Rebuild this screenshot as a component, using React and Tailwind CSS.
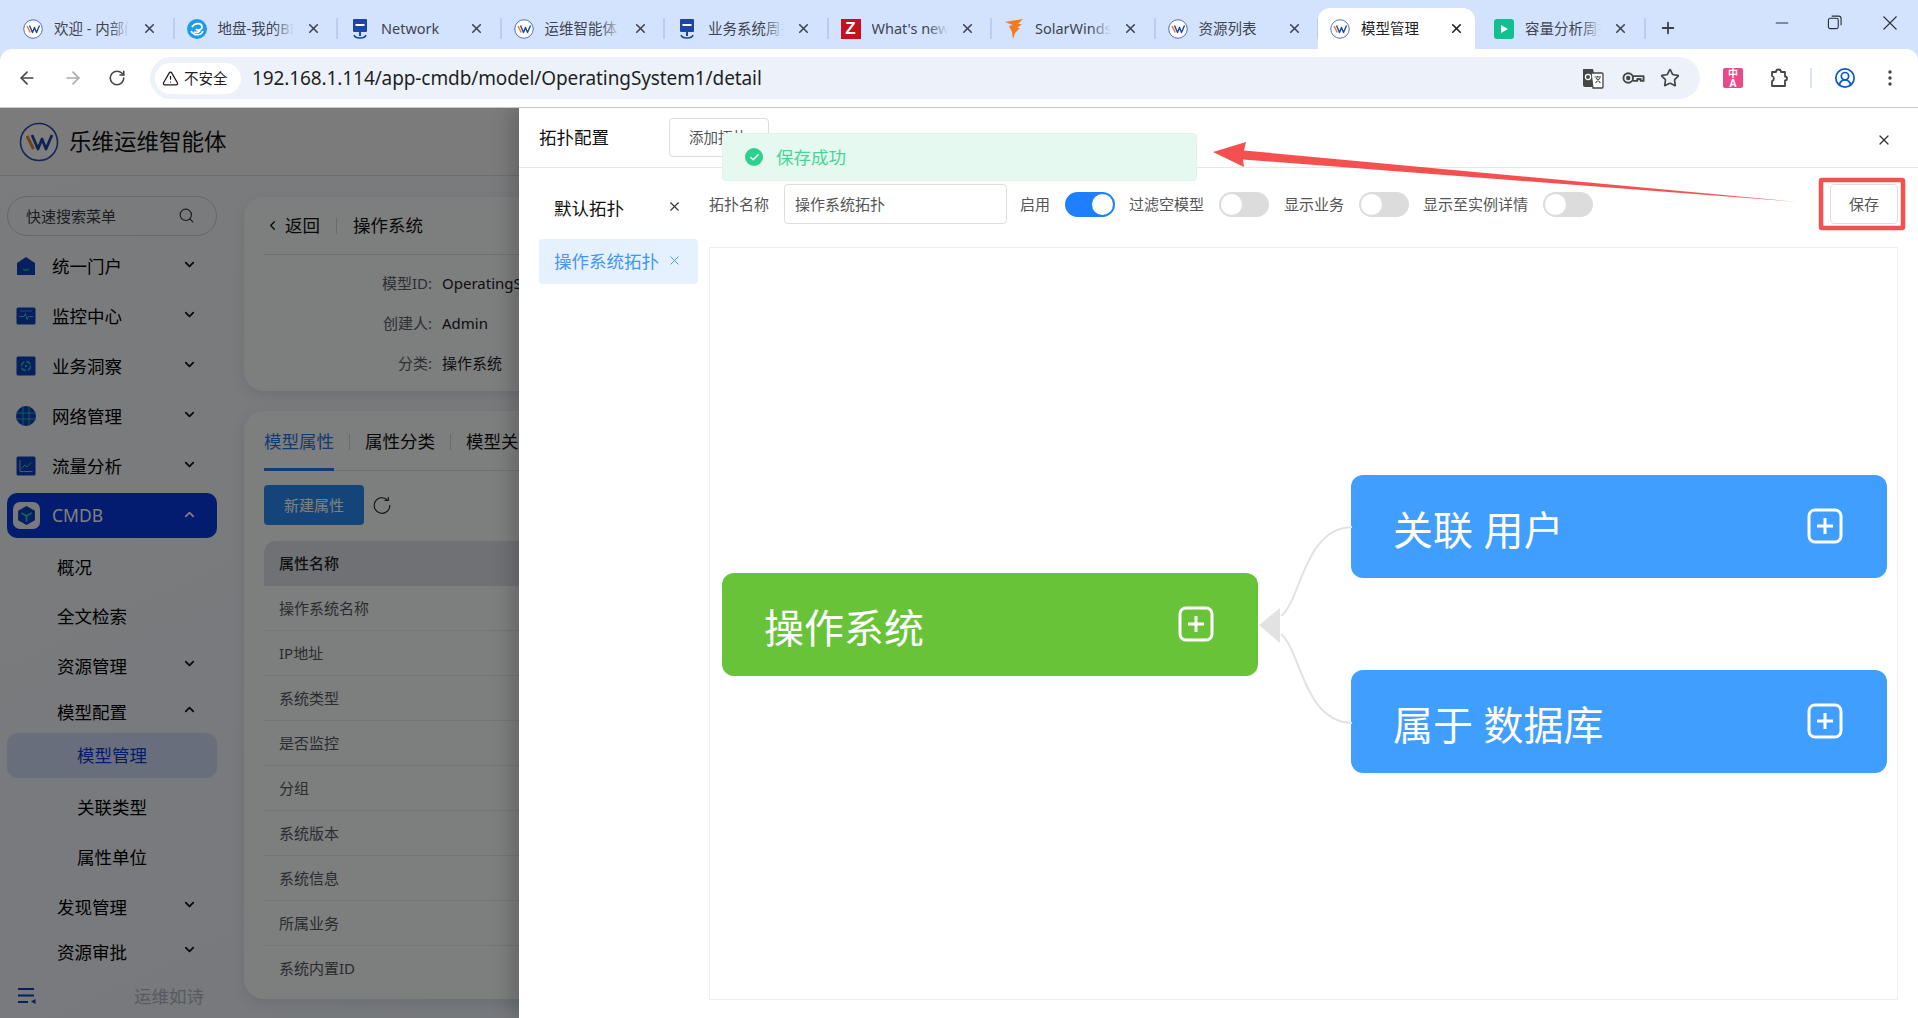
import React from 'react';
import { ArrowLeft, ArrowRight, RotateCw, TriangleAlert, Star, CircleUserRound, X, Plus, Minus, Search, ChevronDown, ChevronUp, ChevronLeft, Check } from 'lucide-react';

const FONT = "font-['Noto_Sans','Noto_Sans_CJK_SC',sans-serif]";

function WLogo({ className }) {
  return (
    <svg viewBox="0 0 40 40" className={className}>
      <circle cx="20" cy="20" r="18.5" fill="#fff" stroke="#2a4fa8" strokeWidth="1.6" />
      <path d="M8 14 L14.5 27" stroke="#e8842a" strokeWidth="3" fill="none" />
      <path d="M13 13 L19 27 L23 17 L27 27 L33 13" stroke="#1f47a6" strokeWidth="2.8" fill="none" strokeLinejoin="round" />
    </svg>
  );
}
function Swirl() {
  return (
    <svg viewBox="0 0 20 20" className="w-5 h-5">
      <circle cx="10" cy="10" r="10" fill="#1e9be8" />
      <path d="M5 8 C8 3 15 4 15 8 C15 11 10 12 9 10 M4 12 C7 17 14 17 16 12 M7 13 C10 14 13 13 13 11" stroke="#fff" strokeWidth="1.7" fill="none" />
    </svg>
  );
}
function Monitor() {
  return (
    <svg viewBox="0 0 20 20" className="w-5 h-5">
      <rect x="3" y="0" width="14" height="13" rx="1" fill="#1b46a8" />
      <rect x="5.5" y="5" width="9" height="2" fill="#fff" />
      <rect x="9" y="13" width="2" height="4" fill="#1b46a8" />
      <path d="M4 16 C5 20 15 20 16 16" stroke="#1b46a8" strokeWidth="1.5" fill="none" />
    </svg>
  );
}
function ZIcon() {
  return (
    <div className="w-5 h-5 bg-[#c4111b] text-white font-bold text-[17px] leading-5 text-center font-['Liberation_Sans',sans-serif]">Z</div>
  );
}
function Flame() {
  return (
    <svg viewBox="0 0 20 20" className="w-5 h-5">
      <path d="M1 3 L19 0 L14 5 L18 5 L13 9 L16 9 L11 14 L9 20 L8 13 L5 7 L9 6 Z" fill="#f37a20" />
    </svg>
  );
}
function PlayIcon() {
  return (
    <div className="w-5 h-5 rounded-[3px] bg-[#10c090] flex items-center justify-center">
      <svg viewBox="0 0 10 10" className="w-2.5 h-2.5"><path d="M2 1 L9 5 L2 9Z" fill="#fff" /></svg>
    </div>
  );
}

const tabs = [
  { t: '欢迎 - 内部门户', i: <WLogo className="w-5 h-5" /> },
  { t: '地盘-我的BI看板', i: <Swirl /> },
  { t: 'Network', i: <Monitor /> },
  { t: '运维智能体', i: <WLogo className="w-5 h-5" /> },
  { t: '业务系统周报表', i: <Monitor /> },
  { t: "What's new in", i: <ZIcon /> },
  { t: 'SolarWinds Pla', i: <Flame /> },
  { t: '资源列表', i: <WLogo className="w-5 h-5" /> },
  { t: '模型管理', i: <WLogo className="w-5 h-5" />, active: true },
  { t: '容量分析周报表', i: <PlayIcon /> },
];

function Tab({ t, i, active, last }) {
  if (active) {
    return (
      <div className="relative w-[163px] h-[41px] shrink-0 flex items-center">
        <div className="absolute left-[-1px] right-[7px] top-0 bottom-0 bg-white rounded-t-[12px]" />
        <div className="relative ml-[11px] mr-[11px] shrink-0">{i}</div>
        <span className="relative text-[14.5px] text-[#1f1f1f] whitespace-nowrap">{t}</span>
        <X className="relative ml-auto mr-[18px] text-[#202020]" size={15} strokeWidth={2.6} />
      </div>
    );
  }
  return (
    <div className="relative w-[163.5px] h-[41px] shrink-0 flex items-center">
      <div className="ml-[12px] mr-[11px] shrink-0">{i}</div>
      <div className="relative w-[76px] overflow-hidden">
        <span className="block text-[14.5px] text-[#3f4450] whitespace-nowrap">{t}</span>
        <div className="absolute right-0 top-0 bottom-0 w-5 bg-gradient-to-r from-[#d3e3fd00] to-[#d3e3fd]" />
      </div>
      <X className="absolute left-[131px] top-[13px] text-[#3f4450]" size={15} strokeWidth={2.6} />
      {!last && <div className="absolute right-0 top-[10px] w-[2px] h-[21px] bg-[#b9cdf0]" />}
    </div>
  );
}

function TabStrip() {
  return (
    <div className="h-[49px] bg-[#d3e3fd] flex items-end pl-[11px] pb-0 relative">
      <div className="flex items-start h-[49px] pt-[8px]">
        {tabs.map((x, k) => <Tab key={k} {...x} />)}
        <div className="w-[2px] h-[21px] bg-[#b9cdf0] mt-[10px] -ml-[2px]" />
        <Plus className="ml-[13px] mt-[11px] text-[#3c4043]" size={18} strokeWidth={2.4} />
      </div>
      <div className="ml-auto flex h-[49px] items-center pb-[4px] text-[#2c3038]">
        <Minus size={20} strokeWidth={1.3} className="mr-[35px]" />
        <svg viewBox="0 0 16 16" className="w-[15px] h-[15px] mr-[41px]" fill="none" stroke="#2c3038" strokeWidth="1.2">
          <rect x="1.5" y="3.5" width="10.5" height="11" rx="2" />
          <path d="M5 1.2 H12.5 A2.5 2.5 0 0 1 15 3.7 V11" />
        </svg>
        <svg viewBox="0 0 14 14" className="w-[14px] h-[14px] mr-[21px]" stroke="#2c3038" strokeWidth="1.1"><path d="M0.5 0.5 L13.5 13.5 M13.5 0.5 L0.5 13.5" /></svg>
      </div>
    </div>
  );
}

function Toolbar() {
  return (
    <div className="h-[59px] bg-[#d3e3fd]">
      <div className="h-[59px] bg-white rounded-t-[12px] border-b border-[#c9c9c9] flex items-center">
        <ArrowLeft size={20} strokeWidth={2} className="ml-[17px] text-[#444746]" />
        <ArrowRight size={20} strokeWidth={2} className="ml-[26px] text-[#a8abaf]" />
        <RotateCw size={18} strokeWidth={2.1} className="ml-[25px] text-[#444746]" />
        <div className="ml-[24px] w-[1550px] h-[42px] rounded-full bg-[#edf2fa] flex items-center pl-[5px] pr-[20px]">
          <div className="h-[31px] w-[86px] rounded-full bg-white flex items-center pl-[7px]">
            <TriangleAlert size={17} strokeWidth={1.8} className="text-[#1f1f1f]" />
            <span className="ml-[5px] text-[14.5px] text-[#1f1f1f] leading-none">不安全</span>
          </div>
          <span className="ml-[11px] text-[19px] text-[#1f1f1f] leading-none tracking-[-0.1px]">192.168.1.114/app-cmdb/model/OperatingSystem1/detail</span>
          <div className="ml-auto flex items-center">
            <svg viewBox="0 0 22 22" className="w-[22px] h-[22px]">
              <path d="M1 2 H11 L15 20 H3 A2 2 0 0 1 1 18Z" fill="#444746" />
              <path d="M9 6 H20 A1 1 0 0 1 21 7 V20 A1 1 0 0 1 20 21 H11Z" fill="#fff" stroke="#444746" strokeWidth="1.3" />
              <circle cx="6" cy="10" r="2.6" fill="none" stroke="#fff" strokeWidth="1.3" />
              <path d="M12.5 10 H19 M15.5 9 V10.5 M13.5 16 L18 11 M14 11 L18.5 16" stroke="#444746" strokeWidth="1.1" fill="none" />
            </svg>
            <svg viewBox="0 0 24 14" className="w-[23px] h-[14px] ml-[18px]" fill="none" stroke="#444746" strokeWidth="2">
              <circle cx="6.5" cy="7" r="5" />
              <circle cx="6.5" cy="7" r="1.3" fill="#444746" />
              <path d="M11.5 5 H22.5 V10 H19.5 V8 H16 V10 H11.5" strokeLinejoin="round" />
            </svg>
            <Star size={20} strokeWidth={2} className="ml-[15px] text-[#444746]" />
          </div>
        </div>
        <div className="ml-[23px] w-5 h-5 rounded-[2px] bg-[#ea4a8a] text-white text-[10px] leading-[10px] font-bold flex flex-col items-center justify-center">
          <span>中</span><span>A</span>
        </div>
        <svg viewBox="0 0 20 20" className="w-5 h-5 ml-[26px]" fill="none" stroke="#444746" strokeWidth="1.8" strokeLinejoin="round">
          <path d="M3 4 H7 A2.2 2.2 0 0 1 12 4 H16 V8.5 A2 2 0 0 1 16 12.5 V18 H3 V13 A2.6 2.6 0 0 0 3 8Z" />
        </svg>
        <div className="w-[2px] h-[20px] bg-[#dbe4f4] ml-[21px]" />
        <CircleUserRound size={22} strokeWidth={1.9} className="ml-[22px] text-[#0b57d0]" />
        <svg viewBox="0 0 6 18" className="w-[6px] h-[18px] ml-[31px]"><circle cx="3" cy="3" r="1.7" fill="#444746" /><circle cx="3" cy="9" r="1.7" fill="#444746" /><circle cx="3" cy="15" r="1.7" fill="#444746" /></svg>
      </div>
    </div>
  );
}

const NAVY = '#0f3fb8';
const iconHouse = (
  <svg viewBox="0 0 20 20" className="w-[20px] h-[20px]"><path d="M10 1 L19 7 V19 H1 V7Z" fill={NAVY} /><path d="M7 13 Q10 15.5 13 13" stroke="#17c0a0" strokeWidth="1.4" fill="none" /></svg>
);
const iconMon = (
  <svg viewBox="0 0 20 20" className="w-[20px] h-[20px]"><rect x="0.5" y="1.5" width="19" height="17" rx="1.5" fill={NAVY} /><path d="M3 10.5 H8 L9.5 7.5 L11 13.5 L12.5 10.5 H17" stroke="#3cc8c0" strokeWidth="1" fill="none" /><path d="M4 5 H16" stroke="#5d84e0" strokeWidth="1" /></svg>
);
const iconBiz = (
  <svg viewBox="0 0 20 20" className="w-[20px] h-[20px]"><rect x="0.5" y="0.5" width="19" height="19" rx="1.5" fill={NAVY} /><circle cx="10" cy="10" r="4.5" stroke="#2ac8c8" strokeWidth="1.4" fill="none" strokeDasharray="5 2" /><circle cx="10" cy="10" r="1.2" fill="#2ac8c8" /></svg>
);
const iconGlobe = (
  <svg viewBox="0 0 20 20" className="w-[20px] h-[20px]"><circle cx="10" cy="10" r="10" fill={NAVY} /><path d="M0 7 H20 M0 13 H20 M7 0 V20 M13 0 V20" stroke="#22c0b8" strokeWidth="0.9" /></svg>
);
const iconChart = (
  <svg viewBox="0 0 20 20" className="w-[20px] h-[20px]"><rect x="0.5" y="0.5" width="19" height="19" rx="1.5" fill={NAVY} /><path d="M4 4 V15.5 H16.5" stroke="#8fb0f0" strokeWidth="1" fill="none" /><path d="M5.5 12.5 L9 9 L11 11 L15 6.5" stroke="#35c8b0" strokeWidth="1" fill="none" /></svg>
);
const iconCube = (
  <div className="w-[27px] h-[27px] rounded-[7px] bg-[#f2f4f8] flex items-center justify-center">
    <svg viewBox="0 0 20 20" className="w-[21px] h-[21px]"><path d="M10 1 L18 5.5 V14.5 L10 19 L2 14.5 V5.5Z" fill="#0a3ec0" /><path d="M5 7.5 L10 10.5 L15 7.5 M10 10.5 V16" stroke="#28d0a8" strokeWidth="1.6" fill="none" /></svg>
  </div>
);

function TopNav({ icon, label, open }) {
  return (
    <div className="h-[50px] flex items-center relative">
      <div className="ml-[16px] w-[20px] h-[20px] flex items-center justify-center">{icon}</div>
      <span className="ml-[16px] text-[17.5px] text-[#000]">{label}</span>
      <ChevronDown size={15} strokeWidth={2.8} className="absolute left-[182px] top-[16px] text-[#111]" />
    </div>
  );
}
function SubNav({ label, h, chev, up, deep }) {
  return (
    <div className={`${h} flex items-center relative`}>
      <span className={`text-[17.5px] text-[#000] ${deep ? 'ml-[77px]' : 'ml-[57px]'}`}>{label}</span>
      {chev && (up
        ? <ChevronUp size={15} strokeWidth={2.8} className="absolute left-[182px] top-[calc(50%-10px)] text-[#111]" />
        : <ChevronDown size={15} strokeWidth={2.8} className="absolute left-[182px] top-[calc(50%-10px)] text-[#111]" />)}
    </div>
  );
}

function Sidebar() {
  return (
    <div className="w-[219px] shrink-0 flex flex-col h-full">
      <div className="mx-[7px] mt-[20px] h-[40px] w-[210px] rounded-full border border-[#c6ccd6] flex items-center pl-[18px] relative">
        <span className="text-[15px] text-[#3a4048]">快速搜索菜单</span>
        <Search size={17} strokeWidth={1.6} className="absolute left-[170px] top-[10px] text-[#333]" />
      </div>
      <div className="mt-[5px] flex flex-col">
        <TopNav icon={iconHouse} label="统一门户" />
        <TopNav icon={iconMon} label="监控中心" />
        <TopNav icon={iconBiz} label="业务洞察" />
        <TopNav icon={iconGlobe} label="网络管理" />
        <TopNav icon={iconChart} label="流量分析" />
        <div className="mt-[2px] mx-[7px] h-[45px] w-[210px] rounded-[10px] bg-[#0638e0] flex items-center relative">
          <div className="ml-[6px]">{iconCube}</div>
          <span className="ml-[12px] text-[17.5px] text-white font-['Noto_Sans',sans-serif]">CMDB</span>
          <ChevronUp size={15} strokeWidth={2.8} className="absolute left-[175px] top-[14px] text-white" />
        </div>
        <div className="mt-[4px]" />
        <SubNav label="概况" h="h-[50px]" />
        <SubNav label="全文检索" h="h-[48px]" />
        <SubNav label="资源管理" h="h-[52px]" chev />
        <SubNav label="模型配置" h="h-[40px]" chev up />
        <div className="mt-[1px] mx-[7px] h-[45px] w-[210px] rounded-[10px] bg-[#d3ddf8] flex items-center">
          <span className="ml-[70px] text-[17.5px] text-[#0a3ad0]">模型管理</span>
        </div>
        <div className="mt-[4px]" />
        <SubNav label="关联类型" h="h-[50px]" deep />
        <SubNav label="属性单位" h="h-[50px]" deep />
        <SubNav label="发现管理" h="h-[50px]" chev />
        <SubNav label="资源审批" h="h-[40px]" chev />
      </div>
      <div className="mt-auto h-[44px] flex items-center relative">
        <svg viewBox="0 0 18 16" className="ml-[18px] w-[18px] h-[16px]">
          <path d="M0 1 H16 M0 7.5 H16 M0 14 H10" stroke="#0f3fb8" strokeWidth="1.8" />
          <path d="M17.5 11 V16 L13 13.5Z" fill="#0f3fb8" />
        </svg>
        <span className="absolute left-[134px] text-[17.5px] text-[#aeb5c3]">运维如诗</span>
      </div>
    </div>
  );
}

function InfoRow({ k, v }) {
  return (
    <div className="h-[40px] flex items-center text-[15px]">
      <span className="w-[168px] text-right text-[#5c6068]">{k}</span>
      <span className="ml-[10px] text-[#1d2026] whitespace-nowrap">{v}</span>
    </div>
  );
}

const attrs = ['操作系统名称', 'IP地址', '系统类型', '是否监控', '分组', '系统版本', '系统信息', '所属业务', '系统内置ID'];

function Main() {
  return (
    <div className="flex-1 min-w-0 pl-[25px] pt-[21px] pr-[20px] flex flex-col gap-[20px]">
      <div className="h-[194px] rounded-[20px] bg-[#fbfcfd] shadow-[0_4px_14px_rgba(40,60,100,0.12)] px-[20px]">
        <div className="h-[58px] border-b border-[#dfe2e6] flex items-center text-[17.5px] text-[#111]">
          <ChevronLeft size={15} strokeWidth={2} className="ml-[1px]" />
          <span className="ml-[5px]">返回</span>
          <div className="ml-[16px] w-px h-[16px] bg-[#d4d7dc]" />
          <span className="ml-[16px]">操作系统</span>
        </div>
        <div className="mt-[8px]">
          <InfoRow k="模型ID:" v="OperatingSystem1" />
          <InfoRow k="创建人:" v="Admin" />
          <InfoRow k="分类:" v="操作系统" />
        </div>
      </div>
      <div className="h-[588px] rounded-[20px] bg-[#fbfcfd] shadow-[0_4px_14px_rgba(40,60,100,0.12)] px-[20px]">
        <div className="h-[60px] border-b border-[#dfe2e6] flex items-end text-[17.5px] text-[#111]">
          <div className="h-[60px] w-[70px] border-b-[3px] border-[#1f78e6] text-[#1f78e6] flex items-center justify-center -mb-px pt-[3px] whitespace-nowrap">模型属性</div>
          <div className="h-[60px] flex items-center pt-[3px]">
            <div className="ml-[15px] w-px h-[16px] bg-[#d4d7dc]" />
            <span className="ml-[15px]">属性分类</span>
            <div className="ml-[15px] w-px h-[16px] bg-[#d4d7dc]" />
            <span className="ml-[15px]">模型关联</span>
          </div>
        </div>
        <div className="mt-[14px] h-[40px] flex items-center">
          <div className="w-[100px] h-[40px] rounded-[4px] bg-[#2a8af0] text-white text-[15px] flex items-center justify-center">新建属性</div>
          <svg viewBox="0 0 18 18" className="ml-[9px] w-[18px] h-[18px]" fill="none" stroke="#222" strokeWidth="1.1">
            <path d="M15 4.5 A7.8 7.8 0 1 0 16.8 9" />
            <path d="M11.5 4.5 H15.3 V1" />
          </svg>
        </div>
        <div className="mt-[16px] h-[45px] rounded-t-[12px] bg-[#dfe3ea] flex items-center pl-[15px] text-[15px] text-[#222] font-medium">属性名称</div>
        {attrs.map((a) => (
          <div key={a} className="h-[45px] border-b border-[#e8eaed] last:border-b-0 flex items-center pl-[15px] text-[15px] text-[#555a60]">{a}</div>
        ))}
      </div>
    </div>
  );
}

function Toggle({ on }) {
  return (
    <div className={`w-[50px] h-[25px] rounded-full shrink-0 flex items-center px-[2px] ${on ? 'bg-[#1e80ff] justify-end' : 'bg-[#dcdcdc] justify-start'}`}>
      <div className="w-[21px] h-[21px] rounded-full bg-white" />
    </div>
  );
}

function PlusBox({ className }) {
  return (
    <svg viewBox="0 0 36 36" className={`w-[36px] h-[36px] ${className || ''}`} fill="none" stroke="#fff" strokeWidth="3">
      <rect x="2" y="2" width="32" height="32" rx="6" />
      <path d="M18 10 V26 M10 18 H26" />
    </svg>
  );
}

function Node({ label, pos, color }) {
  return (
    <div className={`absolute ${pos} w-[536px] h-[103px] rounded-[12px] ${color} flex items-center`}>
      <span className="ml-[42px] mt-[6px] text-[40px] leading-none text-white">{label}</span>
      <PlusBox className="absolute left-[456px] top-[33px]" />
    </div>
  );
}

function Drawer() {
  return (
    <div className="absolute left-[519px] top-0 right-0 bottom-0 bg-white flex flex-col shadow-[-8px_0_18px_rgba(0,0,0,0.18)]">
      <div className="h-[60px] border-b border-[#e8e8e8] flex items-center pl-[20px] relative shrink-0">
        <span className="text-[17.5px] text-[#111]">拓扑配置</span>
        <div className="ml-[60px] w-[100px] h-[39px] rounded-[4px] border border-[#dcdcdc] flex items-center pl-[19px] text-[14.5px] text-[#555]">添加拓扑</div>
        <X size={16} strokeWidth={1.8} className="absolute right-[26px] top-[24px] text-[#333]" />
      </div>
      <div className="flex-1 flex min-h-0">
        <div className="w-[190px] shrink-0 pl-[20px] pt-[20px]">
          <div className="h-[40px] flex items-center pl-[15px] relative">
            <span className="text-[17.5px] text-[#111]">默认拓扑</span>
            <X size={15} strokeWidth={1.7} className="absolute left-[128px] top-[11px] text-[#333]" />
          </div>
          <div className="mt-[11px] w-[159px] h-[45px] rounded-[4px] bg-[#e6f1ff] flex items-center pl-[15px] relative">
            <span className="text-[17.5px] text-[#3f96f8] whitespace-nowrap">操作系统拓扑</span>
            <X size={15} strokeWidth={1.5} className="absolute left-[128px] top-[14px] text-[#3f96f8]" />
          </div>
        </div>
        <div className="flex-1 min-w-0 pt-[16px] pr-[20px] pb-[18px] flex flex-col">
          <div className="h-[40px] flex items-center text-[15px] text-[#555] shrink-0 whitespace-nowrap">
            <span>拓扑名称</span>
            <div className="ml-[15px] w-[223px] h-[40px] rounded-[4px] border border-[#dedede] flex items-center pl-[10px]">操作系统拓扑</div>
            <span className="ml-[13px]">启用</span>
            <div className="ml-[15px]"><Toggle on /></div>
            <span className="ml-[14px]">过滤空模型</span>
            <div className="ml-[15px]"><Toggle /></div>
            <span className="ml-[15px]">显示业务</span>
            <div className="ml-[15px]"><Toggle /></div>
            <span className="ml-[14px]">显示至实例详情</span>
            <div className="ml-[15px]"><Toggle /></div>
            <div className="ml-auto w-[68px] h-[40px] rounded-[4px] border border-[#dedede] flex items-center justify-center">保存</div>
          </div>
          <div className="mt-[23px] flex-1 border border-[#eeeeee] relative">
            <Node label="操作系统" pos="left-[12px] top-[325px]" color="bg-[#68c339]" />
            <Node label="关联 用户" pos="left-[641px] top-[227px]" color="bg-[#409eff]" />
            <Node label="属于 数据库" pos="left-[641px] top-[422px]" color="bg-[#409eff]" />
            <svg viewBox="0 0 100 240" className="absolute left-[549px] top-[258px] w-[100px] h-[240px]" fill="none">
              <path d="M22 110 C42 95 45 22 93 21" stroke="#e2e2e2" strokeWidth="2" />
              <path d="M22 128 C42 145 45 216 93 217" stroke="#e2e2e2" strokeWidth="2" />
              <path d="M0 119 L21 102 L21 137Z" fill="#e2e2e2" />
            </svg>
          </div>
        </div>
      </div>
    </div>
  );
}

function Toast() {
  return (
    <div className="absolute left-[722px] top-[25px] w-[475px] h-[48px] rounded-[4px] bg-[#e6f9f1] border border-[#dff5ec] flex items-center pl-[22px]">
      <div className="w-[18px] h-[18px] rounded-full bg-[#2fd08f] flex items-center justify-center">
        <Check size={11} strokeWidth={3} className="text-white" />
      </div>
      <span className="ml-[13px] text-[17.5px] text-[#48d597]">保存成功</span>
    </div>
  );
}

export default function App() {
  return (
    <div className={`relative w-[1918px] h-[1018px] overflow-hidden bg-white ${FONT}`}>
      <TabStrip />
      <Toolbar />
      <div className="relative h-[910px] overflow-hidden bg-gradient-to-br from-[#f6f8fa] via-[#f0f4fa] to-[#dfe8f6]">
        <div className="h-[68px] border-b border-[#d8dbe0] flex items-center pl-[19px] bg-[#f6f7f8]">
          <WLogo className="w-[40px] h-[40px]" />
          <span className="ml-[10px] text-[22.5px] text-[#111]">乐维运维智能体</span>
        </div>
        <div className="flex h-[842px]">
          <Sidebar />
          <Main />
        </div>
        <div className="absolute inset-0 bg-black/50" />
        <Drawer />
        <Toast />
      </div>
      <svg viewBox="0 0 1918 1018" className="absolute inset-0 w-[1918px] h-[1018px] pointer-events-none">
        <rect x="1821" y="180" width="82" height="48" fill="none" stroke="#f55050" strokeWidth="4.5" rx="1" />
        <path d="M1798 202 L1243 159.5 L1244 167 L1213 152 L1246 142 L1244 150.5Z" fill="#f55050" />
      </svg>
    </div>
  );
}
